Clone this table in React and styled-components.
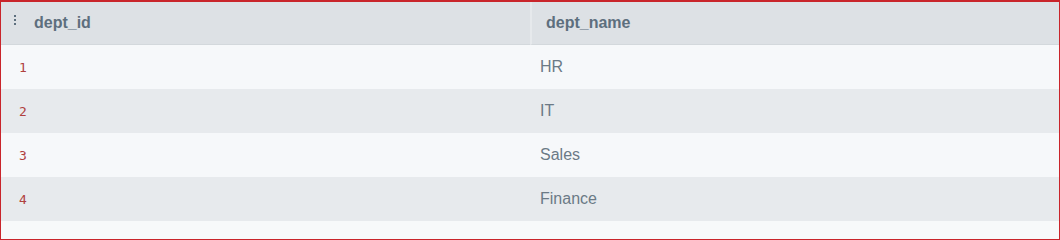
import React from "react";
import styled, { createGlobalStyle } from "styled-components";

const Global = createGlobalStyle`
  html, body { margin: 0; padding: 0; background: #f7f9fa; }
  body { font-family: "Liberation Sans", Arial, sans-serif; }
`;

const Frame = styled.div`
  box-sizing: border-box;
  width: 1060px;
  height: 240px;
  border: 1px solid #c9252b;
  border-top-width: 2px;
  background: #f7f9fa;
  overflow: hidden;
`;

const Grid = styled.div`
  display: grid;
  grid-template-columns: 529px 1fr;
`;

const HeadCell = styled.div`
  box-sizing: border-box;
  height: 43px;
  display: flex;
  align-items: center;
  gap: 18px;
  padding-left: ${(p) => p.$pad}px;
  background: #dde1e5;
  border-bottom: 1px solid #d3d8dc;
  border-left: ${(p) => (p.$divider ? "2px solid #e6e9ec" : "none")};
  color: #5d6f7e;
  font-weight: 700;
  font-size: 16px;
`;

const Grip = styled.span`
  display: inline-flex;
  flex-direction: column;
  gap: 2px;
  margin-top: -7px;
  & > i {
    display: block;
    width: 2px;
    height: 2px;
    background: #5d6f7e;
  }
`;

const Cell = styled.div`
  box-sizing: border-box;
  height: 44px;
  display: flex;
  align-items: center;
  background: ${(p) => (p.$odd ? "#e7eaed" : "#f6f8fa")};
  padding-left: ${(p) => p.$pad}px;
`;

const IdText = styled.span`
  font-family: "DejaVu Sans Mono", "Liberation Mono", monospace;
  font-size: 13px;
  color: #b0413e;
`;

const NameText = styled.span`
  font-size: 16px;
  color: #6b7a86;
`;

const rows = [
  [1, "HR"],
  [2, "IT"],
  [3, "Sales"],
  [4, "Finance"],
];

export default function App() {
  return (
    <>
      <Global />
      <Frame>
        <Grid>
          <HeadCell $pad={13}>
            <Grip>
              <i />
              <i />
              <i />
            </Grip>
            dept_id
          </HeadCell>
          <HeadCell $pad={14} $divider>
            dept_name
          </HeadCell>
          {rows.map(([id, name], i) => (
            <React.Fragment key={id}>
              <Cell $odd={i % 2 === 1} $pad={18}>
                <IdText>{id}</IdText>
              </Cell>
              <Cell $odd={i % 2 === 1} $pad={10}>
                <NameText>{name}</NameText>
              </Cell>
            </React.Fragment>
          ))}
        </Grid>
      </Frame>
    </>
  );
}
